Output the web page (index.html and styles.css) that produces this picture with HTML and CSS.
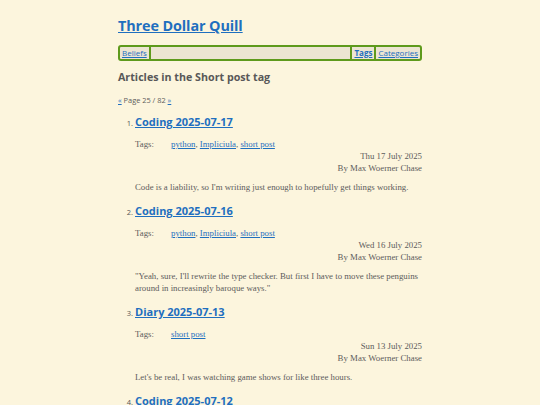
FILE: index.html
```html
<!DOCTYPE html>
<html>
<head>
<meta charset="utf-8">
<link rel="stylesheet" href="styles.css">
</head>
<body>
<div class="page">
  <h1 class="site-title"><a href="#">Three Dollar Quill</a></h1>
  <nav class="nav">
    <a href="#" class="nav-item">Beliefs</a>
    <span class="sep"></span>
    <span class="spacer"></span>
    <span class="sep"></span>
    <a href="#" class="nav-item current">Tags</a>
    <span class="sep"></span>
    <a href="#" class="nav-item">Categories</a>
  </nav>
  <h2 class="heading">Articles in the Short post tag</h2>
  <div class="pager"><a href="#">«</a> Page 25 / 82 <a href="#">»</a></div>
  <ol class="articles">
    <li class="article">
      <h3 class="a-title"><a href="#">Coding 2025-07-17</a></h3>
      <div class="tags"><span class="tags-label">Tags:</span><span><a href="#">python</a>, <a href="#">Impliciula</a>, <a href="#">short post</a></span></div>
      <div class="meta">Thu 17 July 2025<br>By Max Woerner Chase</div>
      <p class="summary">Code is a liability, so I'm writing just enough to hopefully get things working.</p>
    </li>
    <li class="article">
      <h3 class="a-title"><a href="#">Coding 2025-07-16</a></h3>
      <div class="tags"><span class="tags-label">Tags:</span><span><a href="#">python</a>, <a href="#">Impliciula</a>, <a href="#">short post</a></span></div>
      <div class="meta">Wed 16 July 2025<br>By Max Woerner Chase</div>
      <p class="summary">"Yeah, sure, I'll rewrite the type checker. But first I have to move these penguins around in increasingly baroque ways."</p>
    </li>
    <li class="article">
      <h3 class="a-title"><a href="#">Diary 2025-07-13</a></h3>
      <div class="tags"><span class="tags-label">Tags:</span><span><a href="#">short post</a></span></div>
      <div class="meta">Sun 13 July 2025<br>By Max Woerner Chase</div>
      <p class="summary">Let's be real, I was watching game shows for like three hours.</p>
    </li>
    <li class="article">
      <h3 class="a-title"><a href="#">Coding 2025-07-12</a></h3>
    </li>
  </ol>
</div>
</body>
</html>
```

FILE: styles.css
```css
html, body {
  margin: 0;
  padding: 0;
  background: #fcf5dd;
  overflow: hidden;
}
.page {
  width: 304px;
  margin: 0 auto;
  font-family: "Liberation Serif", serif;
  color: #5c5c5c;
  font-size: 8.8px;
}
a {
  color: #1f6fbf;
}
.site-title {
  font-family: "Open Sans", sans-serif;
  font-size: 14.4px;
  font-weight: 700;
  margin: 0;
  padding-top: 14px;
  line-height: 24px;
  letter-spacing: -0.1px;
}
.nav {
  margin-top: 7px;
  display: flex;
  align-items: stretch;
  height: 12px;
  border: 2px solid #5e9a1c;
  border-radius: 3px;
  background: #ece5d2;
  font-family: "Open Sans", sans-serif;
  font-size: 8px;
  line-height: 12px;
}
.nav-item {
  padding: 0 2px;
}
.nav-item.current {
  font-weight: 700;
}
.sep {
  width: 2px;
  background: #5e9a1c;
}
.spacer {
  flex: 1;
}
.heading {
  font-family: "Open Sans", sans-serif;
  font-size: 10.7px;
  font-weight: 700;
  margin: 0;
  margin-top: 7px;
  line-height: 18px;
  color: #585858;
}
.pager {
  font-family: "Open Sans", sans-serif;
  font-size: 7.4px;
  margin-top: 9px;
  line-height: 10px;
}
.articles {
  margin: 9px 0 0 0;
  padding-left: 17px;
}
.article {
  font-size: 7.5px;
}
.article::marker {
  font-family: "Open Sans", sans-serif;
  color: #555;
}
.a-title {
  font-family: "Open Sans", sans-serif;
  font-size: 11px;
  font-weight: 700;
  margin: 0;
  line-height: 16px;
}
.tags {
  display: flex;
  margin-top: 8px;
  line-height: 12px;
  font-size: 8.8px;
}
.tags-label {
  width: 36px;
}
.meta {
  text-align: right;
  line-height: 12px;
  font-size: 8.8px;
}
.summary {
  margin: 7px 0 0 0;
  font-size: 8.8px;
  line-height: 12px;
  padding-bottom: 10px;
}
```
